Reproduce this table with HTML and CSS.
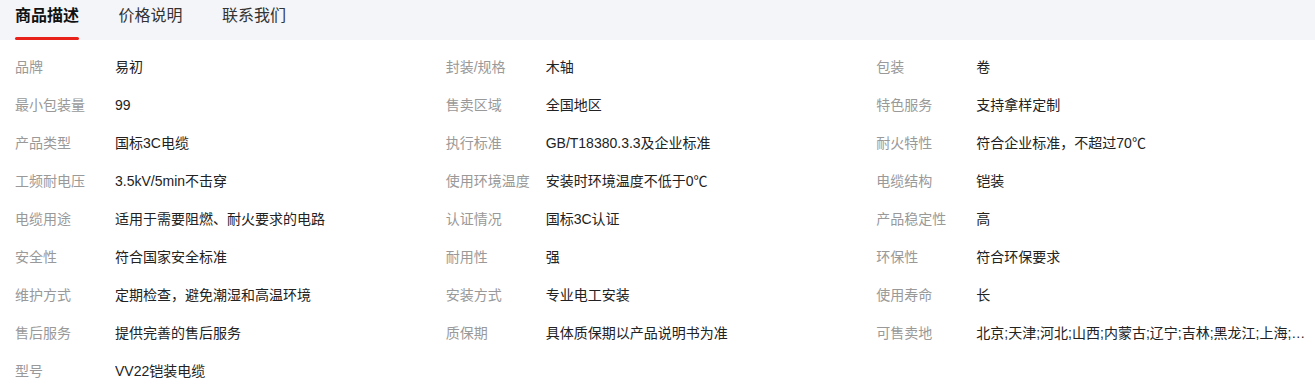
FILE: index.html
```html
<!DOCTYPE html>
<html lang="zh-CN">
<head>
<meta charset="utf-8">
<title>商品描述</title>
<link rel="stylesheet" href="styles.css">
</head>
<body>
<div class="tabs">
  <div class="tab active"><span class="tab-text">商品描述</span><span class="tab-line"></span></div>
  <div class="tab"><span class="tab-text">价格说明</span><span class="tab-line"></span></div>
  <div class="tab"><span class="tab-text">联系我们</span><span class="tab-line"></span></div>
</div>
<div class="attrs">
  <div class="attr"><span class="label">品牌</span><span class="value">易初</span></div>
  <div class="attr"><span class="label">封装/规格</span><span class="value">木轴</span></div>
  <div class="attr"><span class="label">包装</span><span class="value">卷</span></div>

  <div class="attr"><span class="label">最小包装量</span><span class="value">99</span></div>
  <div class="attr"><span class="label">售卖区域</span><span class="value">全国地区</span></div>
  <div class="attr"><span class="label">特色服务</span><span class="value">支持拿样定制</span></div>

  <div class="attr"><span class="label">产品类型</span><span class="value">国标3C电缆</span></div>
  <div class="attr"><span class="label">执行标准</span><span class="value">GB/T18380.3.3及企业标准</span></div>
  <div class="attr"><span class="label">耐火特性</span><span class="value">符合企业标准，不超过70℃</span></div>

  <div class="attr"><span class="label">工频耐电压</span><span class="value">3.5kV/5min不击穿</span></div>
  <div class="attr"><span class="label">使用环境温度</span><span class="value">安装时环境温度不低于0℃</span></div>
  <div class="attr"><span class="label">电缆结构</span><span class="value">铠装</span></div>

  <div class="attr"><span class="label">电缆用途</span><span class="value">适用于需要阻燃、耐火要求的电路</span></div>
  <div class="attr"><span class="label">认证情况</span><span class="value">国标3C认证</span></div>
  <div class="attr"><span class="label">产品稳定性</span><span class="value">高</span></div>

  <div class="attr"><span class="label">安全性</span><span class="value">符合国家安全标准</span></div>
  <div class="attr"><span class="label">耐用性</span><span class="value">强</span></div>
  <div class="attr"><span class="label">环保性</span><span class="value">符合环保要求</span></div>

  <div class="attr"><span class="label">维护方式</span><span class="value">定期检查，避免潮湿和高温环境</span></div>
  <div class="attr"><span class="label">安装方式</span><span class="value">专业电工安装</span></div>
  <div class="attr"><span class="label">使用寿命</span><span class="value">长</span></div>

  <div class="attr"><span class="label">售后服务</span><span class="value">提供完善的售后服务</span></div>
  <div class="attr"><span class="label">质保期</span><span class="value">具体质保期以产品说明书为准</span></div>
  <div class="attr"><span class="label">可售卖地</span><span class="value">北京;天津;河北;山西;内蒙古;辽宁;吉林;黑龙江;上海;江苏;浙江;安徽;福建;江西;山东;河南;湖北;湖南;广东;广西;海南;重庆;四川;贵州;云南;西藏;陕西;甘肃;青海;宁夏;新疆</span></div>

  <div class="attr"><span class="label">型号</span><span class="value">VV22铠装电缆</span></div>
</div>
</body>
</html>
```

FILE: styles.css
```css
html, body {
  margin: 0;
  padding: 0;
  background: #ffffff;
}

body {
  font-family: "Liberation Sans", "Noto Sans CJK SC", sans-serif;
  color: #222222;
}

.tabs {
  display: flex;
  gap: 39.5px;
  height: 40px;
  padding-left: 15px;
  background: #f4f5f9;
}

.tab {
  display: flex;
  flex-direction: column;
  justify-content: space-between;
  height: 40px;
}

.tab-text {
  font-size: 16px;
  line-height: 32px;
  color: #333333;
  white-space: nowrap;
}

.tab-line {
  display: block;
  height: 3px;
  border-radius: 2px;
  background: transparent;
}

.tab.active .tab-text {
  font-weight: bold;
  color: #111111;
}

.tab.active .tab-line {
  background: #e8211a;
}

.attrs {
  display: grid;
  grid-template-columns: repeat(3, 1fr);
  grid-auto-rows: 38px;
  padding: 8px 8px 0 15px;
}

.attr {
  display: flex;
  min-width: 0;
  font-size: 14px;
  line-height: 38px;
}

.label {
  flex: 0 0 100px;
  color: #999999;
  white-space: nowrap;
}

.value {
  flex: 1 1 auto;
  min-width: 0;
  color: #222222;
  white-space: nowrap;
  overflow: hidden;
  text-overflow: ellipsis;
}
```
